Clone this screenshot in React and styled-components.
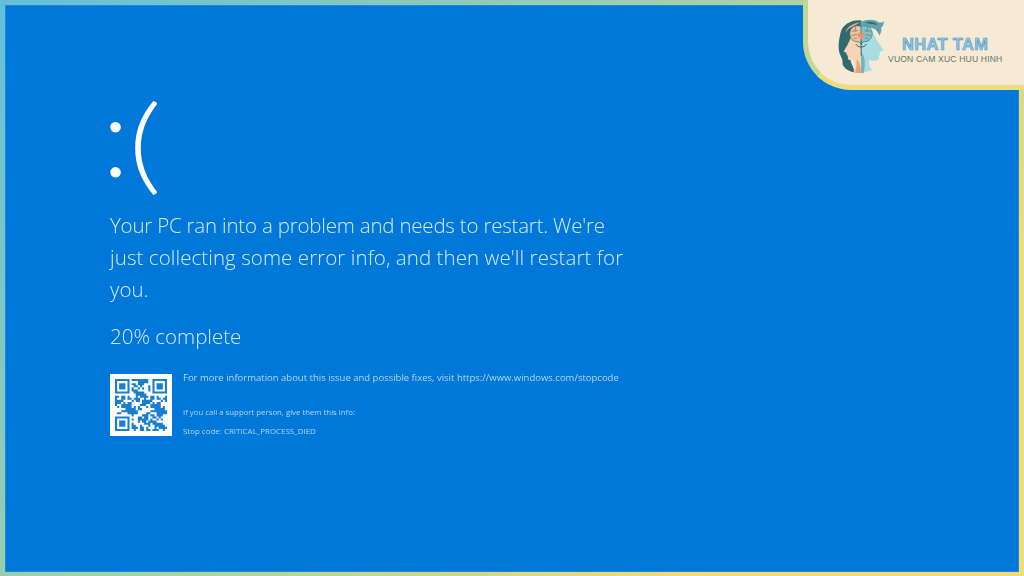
import React from 'react';
import styled, { createGlobalStyle } from 'styled-components';

const Global = createGlobalStyle`
  html, body {
    margin: 0;
    padding: 0;
    background: #0078d9;
  }
`;

const Screen = styled.div`
  position: relative;
  width: 1024px;
  height: 576px;
  box-sizing: border-box;
  padding: 5px 5px 4px 5px;
  background: linear-gradient(135deg, #62bfdc 0%, #a4d2a6 45%, #f0dc78 80%);
  overflow: hidden;
`;

const Panel = styled.main`
  height: 100%;
  box-sizing: border-box;
  padding: 70px 0 0 105px;
  background: #0078d9;
  box-shadow: inset 0 0 0 1px rgba(255, 255, 255, 0.12);
  color: #d8eafa;
  font-family: 'Open Sans', 'Liberation Sans', sans-serif;
  font-weight: 300;
`;

const Sad = styled.div`
  display: flex;
  align-items: center;
  height: 116px;
  color: #fff;
  line-height: 116px;
  font-family: 'Lato', sans-serif;
  font-weight: 300;
`;

const Eyes = styled.span`
  font-size: 113px;
  width: 26px;
  margin-left: -8px;
`;

const Mouth = styled.span`
  margin-top: 14px;
  font-size: 105px;
  transform: scaleX(1.25);
  transform-origin: left center;
`;

const Message = styled.p`
  margin: 18px 0 0;
  font-size: 20.5px;
  line-height: 32px;
  filter: blur(0.35px);
`;

const MessageLine = styled.span`
  display: block;
  white-space: nowrap;
  letter-spacing: ${(p) => p.$spacing || 0}px;
`;

const Progress = styled.p`
  margin: 15px 0 0;
  font-size: 20.5px;
  line-height: 32px;
  filter: blur(0.35px);
`;

const Details = styled.section`
  display: flex;
  gap: 11px;
  margin-top: 22px;
`;

const QrBox = styled.div`
  width: 62px;
  height: 62px;
  box-sizing: border-box;
  padding: 5px;
  background: #fff;
  filter: blur(0.6px);
`;

const Info = styled.div`
  display: flex;
  flex-direction: column;
  filter: blur(0.35px);
`;

const InfoLine = styled.span`
  font-size: ${(p) => p.$size}px;
  line-height: 12px;
  margin-top: ${(p) => p.$gap}px;
  font-weight: 400;
  color: #b5d8f4;
  white-space: nowrap;
`;

const Badge = styled.aside`
  position: absolute;
  top: 0;
  right: 0;
  display: flex;
  align-items: flex-start;
  width: 221px;
  height: 90px;
  box-sizing: border-box;
  padding: 19px 0 0 29px;
  background: #f6ead4;
  border-left: 5px solid #c4d792;
  border-bottom: 5px solid #ebdc80;
  border-bottom-left-radius: 48px;
`;

const BadgeText = styled.div`
  display: flex;
  flex-direction: column;
  align-items: center;
  margin: 16px 0 0 4px;
  font-family: 'Liberation Sans', sans-serif;
`;

const BrandName = styled.div`
  font-size: 16.4px;
  line-height: 18px;
  font-weight: 700;
  letter-spacing: 0.4px;
  color: #8dc9ee;
  -webkit-text-stroke: 0.6px #4d94b8;
`;

const BrandTag = styled.div`
  margin-top: 1px;
  font-size: 8.6px;
  line-height: 10px;
  letter-spacing: 0.15px;
  color: #6b7068;
  white-space: nowrap;
`;

const QR_ROWS = [
  '10110100101101',
  '01001110110010',
  '11010011001011',
  '00101101010110',
  '11100100111001',
  '01011011000110',
  '10010101101101',
  '11101001010010',
  '00110110101110',
  '10101001110101',
  '01100111001011',
  '11011000110100',
  '00100111011011',
  '10111010100110',
  '01001101101001',
];

const QR_SIZE = 25;
const FINDERS = [[0, 0], [18, 0], [0, 18]];

function qrModules() {
  const cells = [];
  const inFinder = (x, y) => FINDERS.some(([ox, oy]) => x >= ox - 1 && x <= ox + 7 && y >= oy - 1 && y <= oy + 7);
  const finderOn = (x, y) => FINDERS.some(([ox, oy]) => {
    const a = x - ox;
    const b = y - oy;
    if (a < 0 || a > 6 || b < 0 || b > 6) return false;
    if (a === 0 || a === 6 || b === 0 || b === 6) return true;
    return a >= 2 && a <= 4 && b >= 2 && b <= 4;
  });
  for (let y = 0; y < QR_SIZE; y++) {
    for (let x = 0; x < QR_SIZE; x++) {
      let on;
      if (inFinder(x, y)) {
        on = finderOn(x, y);
      } else {
        const row = QR_ROWS[y % QR_ROWS.length];
        on = row[(x * 3 + y) % row.length] === '1';
      }
      if (on) cells.push([x, y]);
    }
  }
  return cells;
}

const QrCode = () => (
  <svg width="52" height="52" viewBox="0 0 25 25" style={{ display: 'block' }}>
    <path
      fill="#1a7ed0"
      d={qrModules().map(([x, y]) => `M${x} ${y}h1v1h-1z`).join('')}
    />
  </svg>
);

const Logo = () => (
  <svg width="47" height="54" viewBox="0 0 140 162" style={{ flex: 'none' }}>
    {/* her hair */}
    <path fill="#2f6a70" d="M72 4C42 2 16 16 10 42 6 62 2 78 6 98c3 14 12 20 10 34-1 10 14 24 34 28 4-8-6-20-10-36L72 60z" />
    <path fill="#e8a988" d="M70 10C50 12 30 22 24 42c6-10 14-16 20-18z" />
    {/* her face and neck */}
    <path fill="#f8d3b6" d="M72 50C56 46 42 54 38 62c-3 8-12 26-18 34-1 3 5 4 8 5-1 4 1 6 3 7-1 3 1 5 2 6-2 5-1 8 4 9 6 1 11 0 14 2 3 10 3 20-2 30l23 7z" />
    <path fill="#ef9f78" d="M58 122c8 6 14 20 14 40H52c6-12 8-26 6-40z" />
    {/* his face and neck */}
    <path fill="#a9dde2" d="M72 30c24-4 34 4 38 16 4 10 18 34 28 44 2 4-4 7-10 8 2 4 0 6-2 8 2 3 1 5-1 7 2 8-4 12-12 12-8 1-14 0-18-1 0 12 2 22 10 30l-33 8z" />
    <path fill="#6fb3bd" d="M72 100c10 10 14 30 8 62h-8z" />
    {/* his hair */}
    <path fill="#5fa4ae" d="M70 8c18-8 42-8 52 0 6 4 12 4 18-2 0 10-2 16-8 20 2 8 0 16-6 24-2-16-14-28-56-26z" />
    <path fill="#2f6a70" d="M82 10c16-4 30-2 40 8-14-2-28-4-40-8zM118 26c4 6 6 12 6 20-2-8-4-14-6-20z" />
    {/* brain */}
    <path fill="#eec4a0" stroke="#56686a" strokeWidth="2.2" d="M72 22C54 16 38 26 38 44c0 14 10 24 22 24 6 0 9 3 12 8z" />
    <path fill="#83c2cb" stroke="#3f7c86" strokeWidth="2.2" d="M72 22c18-6 33 4 33 22 0 14-10 24-22 24-6 0-8 3-11 8z" />
    <path fill="none" stroke="#56686a" strokeWidth="2" d="M44 38c6-6 10 2 18-4M43 50c6 2 8-6 16-3M50 60c4-4 7-3 10-2M54 24c2 5-1 8 0 11" />
    <path fill="none" stroke="#3f7c86" strokeWidth="2" d="M82 34c8 6 12-2 18 4M85 47c8-3 10 5 17 3M84 58c3-1 7-2 10 2M90 24c-1 3 2 6 0 11" />
    <path fill="#f0906f" d="M72 60c-7-4-11-8-11-13 0-6 8-8 11-2 3-6 11-4 11 2 0 5-4 9-11 13z" />
    <path fill="none" stroke="#2f6a70" strokeWidth="3" d="M72 66v44M72 84c-7 0-12-3-16-9M72 84c7 0 12-3 16-9" />
  </svg>
);

export default function App() {
  return (
    <>
      <Global />
      <Screen>
        <Panel>
          <Sad>
            <Eyes>:</Eyes>
            <Mouth>(</Mouth>
          </Sad>
          <Message>
            <MessageLine $spacing={-0.21}>Your PC ran into a problem and needs to restart. We're</MessageLine>
            <MessageLine $spacing={0.07}>just collecting some error info, and then we'll restart for</MessageLine>
            <MessageLine>you.</MessageLine>
          </Message>
          <Progress>20% complete</Progress>
          <Details>
            <QrBox>
              <QrCode />
            </QrBox>
            <Info>
              <InfoLine $size={9.5} $gap={-2}>For more information about this issue and possible fixes, visit https://www.windows.com/stopcode</InfoLine>
              <InfoLine $size={7.8} $gap={22}>If you call a support person, give them this info:</InfoLine>
              <InfoLine $size={7.95} $gap={7}>Stop code: CRITICAL_PROCESS_DIED</InfoLine>
            </Info>
          </Details>
        </Panel>
        <Badge>
          <Logo />
          <BadgeText>
            <BrandName>NHAT TAM</BrandName>
            <BrandTag>VUON CAM XUC HUU HINH</BrandTag>
          </BadgeText>
        </Badge>
      </Screen>
    </>
  );
}
